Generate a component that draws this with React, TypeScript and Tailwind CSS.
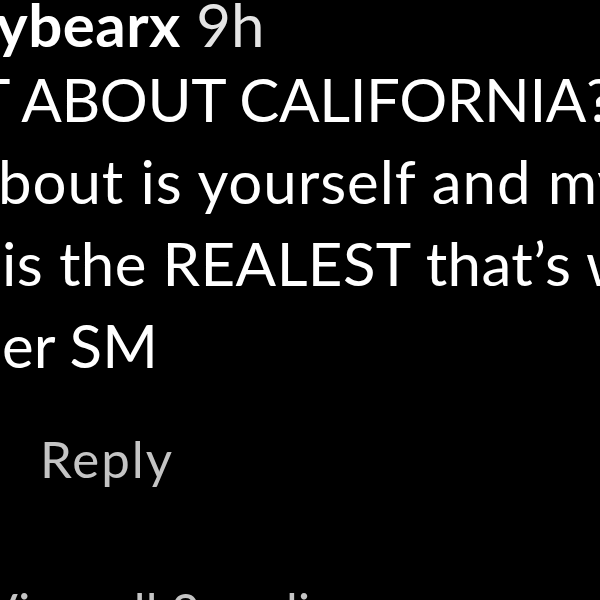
export default function App() {
  return (
    <div className="w-[600px] h-[600px] overflow-hidden bg-black text-white font-['Lato',sans-serif]">
      <div className="whitespace-nowrap">
        <div className="mt-[-10px] ml-[-4px] text-[60px] leading-[68px]">
          <span className="font-bold tracking-[0.5px]">ybearx</span>{" "}
          <span className="text-[#e4e4e4]">9h</span>
        </div>
        <div className="text-[60px] leading-[82px]">
          <div className="ml-[-25px] tracking-[-0.4px]">T ABOUT CALIFORNIA?</div>
          <div className="ml-[-2px] tracking-[0.9px]">bout is yourself and my</div>
          <div className="ml-[2px] tracking-[0.4px]">is the REALEST that’s what</div>
          <div className="ml-[2px]">er SM</div>
        </div>
        <div className="mt-[43px] ml-[40px] text-[51px] leading-[60px] tracking-[2px] text-[#c4c4c4]">Reply</div>
        <div className="mt-[92px] ml-[-16px] text-[50px] leading-[60px] tracking-[0.3px] text-[#c4c4c4]">View all 2 replies</div>
      </div>
    </div>
  );
}
